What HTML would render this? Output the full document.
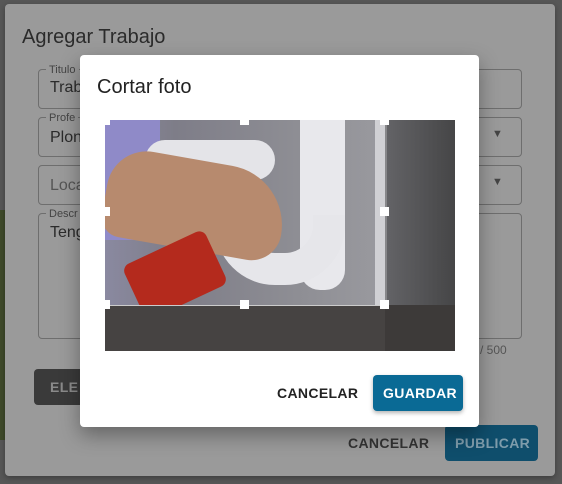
<!DOCTYPE html><html><head><style>
*{margin:0;padding:0;box-sizing:border-box}
body{width:562px;height:484px;overflow:hidden;background:#575757;font-family:"Liberation Sans",sans-serif;position:relative}
.abs{position:absolute}
.fld{position:absolute;border:1px solid #6e6e6e;border-radius:4px;left:38px;width:484px}
.t{position:absolute;color:#2b2b2b;white-space:nowrap}
.btn{font-size:14px;letter-spacing:0.35px;font-weight:bold}
</style></head><body>
<div class="abs" style="left:0;top:210px;width:10px;height:230px;background:#3f4a2a"></div>
<div class="abs" style="left:5px;top:4px;width:550px;height:472px;background:#9a9a9a;border-radius:4px;box-shadow:0 2px 6px rgba(0,0,0,.3)"></div>
<div class="t" style="left:22px;top:26px;font-size:20px">Agregar Trabajo</div>
<div class="fld" style="top:69px;height:40px"></div>
<div class="t" style="left:46px;top:64px;font-size:11px;background:#9a9a9a;padding:0 3px;color:#444">Titulo</div>
<div class="t" style="left:50px;top:79px;font-size:16px">Trab</div>
<div class="fld" style="top:117px;height:40px"></div>
<div class="t" style="left:46px;top:112px;font-size:11px;background:#9a9a9a;padding:0 3px;color:#444">Profe</div>
<div class="t" style="left:50px;top:129px;font-size:16px">Plon</div>
<div class="t" style="left:492px;top:128px;font-size:11px;color:#444">▼</div>
<div class="fld" style="top:165px;height:40px"></div>
<div class="t" style="left:50px;top:177px;font-size:16px;color:#555">Loca</div>
<div class="t" style="left:492px;top:176px;font-size:11px;color:#444">▼</div>
<div class="fld" style="top:213px;height:126px"></div>
<div class="t" style="left:46px;top:208px;font-size:11px;background:#9a9a9a;padding:0 3px;color:#444">Descr</div>
<div class="t" style="left:50px;top:224px;font-size:16px">Teng</div>
<div class="t" style="left:480px;top:343px;font-size:12px;color:#555">/ 500</div>
<div class="abs" style="left:34px;top:369px;width:60px;height:36px;background:#3a3a3a;border-radius:4px"></div>
<div class="t btn" style="left:50px;top:379px;color:#8a8a8a">ELE</div>
<div class="t btn" style="left:348px;top:435px;color:#333">CANCELAR</div>
<div class="abs" style="left:445px;top:425px;width:93px;height:36px;background:#0f4e6c;border-radius:4px"></div>
<div class="t btn" style="left:455px;top:435px;color:#7e9cab">PUBLICAR</div>

<div class="abs" style="left:80px;top:55px;width:399px;height:372px;background:#fff;border-radius:4px;box-shadow:0 8px 20px rgba(0,0,0,.35)"></div>
<div class="t" style="left:97px;top:76px;font-size:20px;color:#222">Cortar foto</div>
<div class="abs" style="left:105px;top:120px;width:350px;height:231px;overflow:hidden;background:#7a7a80">
 <div class="abs" style="left:0;top:0;width:350px;height:231px;background:linear-gradient(90deg,#8a89a0 0,#7e7d88 20%,#8e8e94 55%,#9a9a9f 80%,#6b6b6d 100%)"></div>
 <div class="abs" style="left:0;top:0;width:55px;height:120px;background:#8f8ac8"></div>
 <div class="abs" style="left:195px;top:0;width:45px;height:170px;background:#e8e8ec;border-radius:0 0 20px 20px"></div>
 <div class="abs" style="left:110px;top:95px;width:130px;height:70px;border:32px solid #e6e6ea;border-top:none;border-radius:0 0 60px 60px"></div>
 <div class="abs" style="left:40px;top:20px;width:130px;height:40px;background:#e4e4e8;border-radius:20px"></div>
 <div class="abs" style="left:270px;top:0;width:12px;height:185px;background:#d0d0d4"></div>
 <div class="abs" style="left:0;top:40px;width:180px;height:90px;background:#b78a6e;border-radius:40px 60px 30px 20px;transform:rotate(10deg)"></div>
 <div class="abs" style="left:25px;top:125px;width:90px;height:60px;background:#b42a1d;border-radius:8px;transform:rotate(-25deg)"></div>
 <div class="abs" style="left:0;top:185px;width:350px;height:46px;background:#5e5a58"></div>
 <div class="abs" style="left:280px;top:0;width:70px;height:231px;background:rgba(0,0,0,.35)"></div>
 <div class="abs" style="left:0;top:185px;width:280px;height:46px;background:rgba(0,0,0,.25)"></div>
 <div class="abs" style="left:0;top:185px;width:280px;height:1px;background:#ccc"></div>
</div>
<div class="abs" style="left:101px;top:116px;width:9px;height:9px;background:#fff"></div>
<div class="abs" style="left:240px;top:116px;width:9px;height:9px;background:#fff"></div>
<div class="abs" style="left:380px;top:116px;width:9px;height:9px;background:#fff"></div>
<div class="abs" style="left:101px;top:207px;width:9px;height:9px;background:#fff"></div>
<div class="abs" style="left:380px;top:207px;width:9px;height:9px;background:#fff"></div>
<div class="abs" style="left:101px;top:300px;width:9px;height:9px;background:#fff"></div>
<div class="abs" style="left:240px;top:300px;width:9px;height:9px;background:#fff"></div>
<div class="abs" style="left:380px;top:300px;width:9px;height:9px;background:#fff"></div>
<div class="t btn" style="left:277px;top:385px;color:#222">CANCELAR</div>
<div class="abs" style="left:373px;top:375px;width:90px;height:36px;background:#0a6a95;border-radius:4px;box-shadow:0 2px 4px rgba(0,0,0,.3)"></div>
<div class="t btn" style="left:383px;top:385px;color:#fff">GUARDAR</div>
</body></html>
